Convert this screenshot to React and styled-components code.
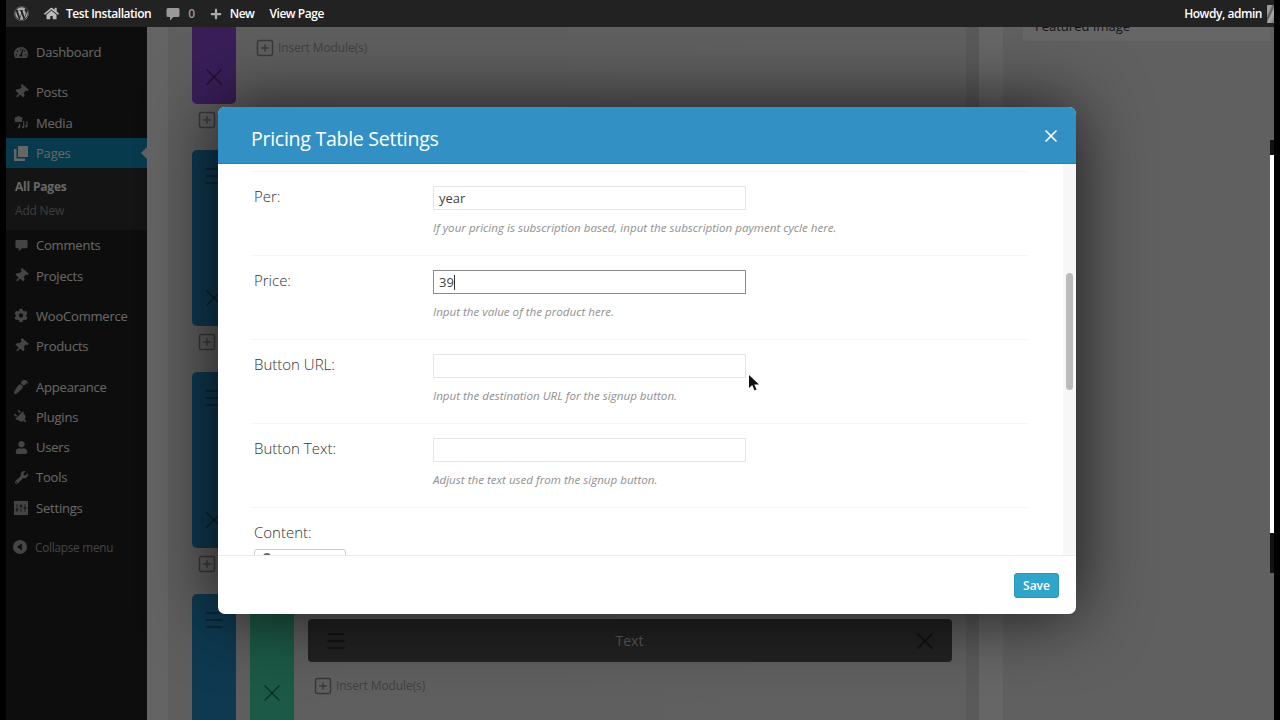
import styled, { createGlobalStyle } from 'styled-components';
import { Menu, X, SquarePlus } from 'lucide-react';
import {
  FaWordpress,
  FaHome,
  FaPlus,
  FaTachometerAlt,
  FaThumbtack,
  FaCog,
  FaPaintBrush,
  FaPlug,
  FaUser,
  FaWrench,
} from 'react-icons/fa';

const GlobalStyle = createGlobalStyle`
  html, body {
    margin: 0;
    padding: 0;
    background: #000;
    font-family: "Open Sans", "Liberation Sans", sans-serif;
  }
  * {
    box-sizing: border-box;
  }
`;

const Frame = styled.div`
  position: relative;
  width: 1280px;
  height: 720px;
  padding: 0 6px;
  background: #000;
  overflow: hidden;
`;

const Screen = styled.div`
  display: flex;
  flex-direction: column;
  height: 100%;
  background: #f1f1f1;
`;

const TopBar = styled.header`
  position: relative;
  z-index: 3;
  flex: none;
  display: flex;
  align-items: center;
  gap: 15px;
  height: 27px;
  padding-left: 8px;
  background: #222;
  color: #fff;
  font-size: 12px;
  font-weight: 600;
  letter-spacing: -0.45px;
`;

const TopGroup = styled.div`
  display: flex;
  align-items: center;
  gap: ${p => p.$gap || 7}px;
  color: ${p => p.$color || '#fff'};
`;

const TopRight = styled.div`
  margin-left: auto;
  display: flex;
  align-items: center;
  gap: 5px;
`;

const Avatar = styled.div`
  width: 7px;
  height: 18px;
  background: linear-gradient(115deg, #999 30%, #555 45%, #aaa 60%, #777);
`;

const Body = styled.div`
  flex: 1;
  display: flex;
  min-height: 0;
`;

const Sidebar = styled.nav`
  flex: none;
  width: 141px;
  padding-top: 10px;
  background: #222;
  color: #fff;
  font-size: 13px;
`;

const MenuItem = styled.div`
  position: relative;
  display: flex;
  align-items: center;
  height: 30.3px;
  margin-top: ${p => (p.$group ? 10 : 0)}px;
  padding-left: 8px;
  gap: 8px;
  letter-spacing: -0.2px;
  background: ${p => (p.$active ? '#0f92bf' : 'transparent')};

  ${p =>
    p.$active &&
    `&::after {
      content: '';
      position: absolute;
      right: 0;
      top: 9px;
      border: 6px solid transparent;
      border-right-color: #f1f1f1;
    }`}
`;

const MenuIcon = styled.span`
  flex: none;
  display: flex;
  align-items: center;
  justify-content: center;
  width: 14px;
  height: 16px;
  color: ${p => (p.$active ? '#fff' : '#aaa')};
  transform: ${p => p.$turn || 'none'};
`;

const SubMenu = styled.div`
  padding: 7px 0 7px 9px;
  background: #333;
  font-size: 12px;
  letter-spacing: -0.2px;
`;

const SubItem = styled.div`
  height: 24px;
  line-height: 24px;
  font-weight: ${p => (p.$current ? 700 : 400)};
  color: ${p => (p.$current ? '#fff' : '#999')};
`;

const Collapse = styled.div`
  display: flex;
  align-items: center;
  gap: 8px;
  height: 30px;
  margin-top: 9px;
  padding-left: 7px;
  font-size: 11.7px;
  letter-spacing: -0.2px;
  color: #aaa;
`;

const Canvas = styled.main`
  flex: 1;
  display: flex;
  min-width: 0;
  overflow: hidden;
`;

const Gutter = styled.div`
  flex: none;
  width: 21px;
  background: #fafafa;
`;

const Builder = styled.section`
  flex: none;
  display: flex;
  gap: 14px;
  width: 811px;
  padding-left: 24px;
  background: linear-gradient(90deg, #ececec, #f0f0f0 98.4%, #e2e2e2 98.4%);
`;

const Rail = styled.div`
  flex: none;
  width: 44px;
`;

const Stripe = styled.div`
  flex: none;
  display: flex;
  flex-direction: column;
  justify-content: ${p => p.$justify || 'space-between'};
  align-items: center;
  width: 44px;
  height: ${p => p.$height}px;
  padding: ${p => p.$padding || '14px 0'};
  border-radius: ${p => p.$radius || '5px'};
  background: ${p => p.$color};
  color: rgba(0, 0, 0, 0.4);
`;

const RailInsert = styled.div`
  display: flex;
  height: 46px;
  padding: 6px 0 0 5px;
  color: #909090;
`;

const BuilderMain = styled.div`
  flex: 1;
  min-width: 0;
  padding-top: 11px;
`;

const InsertRow = styled.div`
  display: flex;
  align-items: center;
  gap: 3px;
  height: 19px;
  padding-left: 5px;
  font-size: 12px;
  letter-spacing: -0.1px;
  color: #a0a0a0;

  svg {
    color: #909090;
  }
`;

const InnerRow = styled.div`
  display: flex;
  gap: 14px;
  margin-top: 423px;
`;

const ModuleStack = styled.div`
  flex: none;
  width: 644px;
  padding-top: 139px;
`;

const Module = styled.div`
  display: flex;
  align-items: center;
  justify-content: space-between;
  height: 43px;
  padding: 0 13px 0 16px;
  border-radius: 4px;
  background: #555;
  color: #2a2a2a;
  font-size: 14px;
`;

const ModuleTitle = styled.span`
  color: #ddd;
`;

const ModuleInsert = styled(InsertRow)`
  margin-top: 14px;
`;

const Spacer = styled.div`
  flex: none;
  width: 24px;
  background: #fefefe;
`;

const SidePanel = styled.aside`
  flex: none;
  width: 267px;
  padding-left: 20px;
`;

const SideBox = styled.div`
  height: 27px;
  margin-top: -13px;
  padding-left: 12px;
  background: #fff;
  color: #333;
  font-size: 13px;
  line-height: 25px;
`;

const EdgeSliver = styled.div`
  position: absolute;
  z-index: 3;
  top: 140px;
  right: 6px;
  width: 4px;
  height: 433px;
  background: linear-gradient(#111 15px, #fff 15px, #fff 393px, #111 393px);
`;

const Overlay = styled.div`
  position: absolute;
  z-index: 2;
  top: 27px;
  left: 6px;
  right: 6px;
  bottom: 0;
  padding: 80px 0 0 212px;
  background: rgba(0, 0, 0, 0.6);
`;

const Modal = styled.div`
  position: relative;
  display: flex;
  flex-direction: column;
  width: 858px;
  height: 507px;
  border-radius: 7px;
  background: #fff;
  box-shadow: 0 0 70px rgba(0, 0, 0, 0.75);
`;

const ModalHeader = styled.div`
  flex: none;
  display: flex;
  align-items: center;
  justify-content: space-between;
  height: 57px;
  padding: 2px 15px 0 33px;
  border-radius: 7px 7px 0 0;
  border-bottom: 1px solid #2a7fb0;
  background: #3390c4;
  color: #fff;
`;

const ModalTitle = styled.h2`
  margin: 4px 0 0;
  font-size: 19.6px;
  font-weight: 400;
  letter-spacing: -0.3px;
`;

const ModalBody = styled.div`
  flex: 1;
  display: flex;
  min-height: 0;
  border-bottom: 1px solid #ececec;
`;

const ScrollArea = styled.div`
  flex: 1;
  min-width: 0;
  padding: 7px 35px 0 32px;
  overflow: hidden;
`;

const Row = styled.div`
  display: grid;
  grid-template-columns: 179px 1fr;
  height: 84px;
  padding: 14px 0 0 4px;
  border-top: 1px solid #f6f6f6;
`;

const Label = styled.label`
  display: block;
  font-size: 15px;
  font-weight: 300;
  line-height: 20px;
  color: #333;
`;

const Field = styled.div`
  display: flex;
  align-items: center;
  width: 313px;
  height: 24px;
  padding-left: 5px;
  border: 1px solid ${p => (p.$focused ? '#8a8a8a' : '#e4e4e4')};
  font-size: 13px;
  color: #444;
`;

const Caret = styled.span`
  width: 1px;
  height: 15px;
  background: #333;
`;

const Hint = styled.p`
  margin: 10px 0 0;
  font-size: 11.6px;
  font-style: italic;
  line-height: 16px;
  color: #909090;
`;

const ContentRow = styled.div`
  padding: 14px 0 0 4px;
  border-top: 1px solid #f6f6f6;
`;

const EditorTab = styled.div`
  width: 92px;
  height: 30px;
  margin-top: 7px;
  padding: 3px 0 0 8px;
  border: 1px solid #ccc;
  border-radius: 3px 3px 0 0;
`;

const EditorDot = styled.div`
  width: 8px;
  height: 8px;
  border-radius: 50%;
  background: #666;
`;

const ScrollTrack = styled.div`
  flex: none;
  width: 13px;
  padding: 109px 3px 0;
  background: #f7f7f7;
`;

const ScrollThumb = styled.div`
  height: 117px;
  border-radius: 4px;
  background: #bbb;
`;

const ModalFooter = styled.div`
  flex: none;
  display: flex;
  align-items: center;
  justify-content: flex-end;
  height: 58px;
  padding-right: 17px;
`;

const SaveButton = styled.button`
  width: 45px;
  height: 25px;
  padding: 0;
  border: 1px solid #2a95b8;
  border-radius: 3px;
  background: #2fa5c9;
  color: #fff;
  font-family: inherit;
  font-size: 12px;
  font-weight: 600;
`;

const Pointer = styled.svg`
  position: absolute;
  left: 531px;
  top: 268px;
`;

// dashicons that the icon packages do not have
const CommentIcon = ({ size = 14, color = 'currentColor' }) => (
  <svg width={size} height={size} viewBox="0 0 14 14" fill={color}>
    <path d="M2 1h10a1.5 1.5 0 0 1 1.5 1.5v6A1.5 1.5 0 0 1 12 10H7.5L4 13.5V10H2A1.5 1.5 0 0 1 .5 8.500v-6A1.500 1.500 0 0 1 2 1z" />
  </svg>
);

const MediaIcon = () => (
  <svg width="17" height="15" viewBox="0 0 17 15" fill="currentColor">
    <path d="M1 1h2l1-1h3l1 1h2v6H1z" />
    <path d="M11 6h1.500v7a1.500 1.500 0 1 1-1.500-1.400zM15 6h1.500v6a1.500 1.500 0 1 1-1.500-1.400zM6 9h1.500v4a1.500 1.500 0 1 1-1.500-1.400z" />
  </svg>
);

const PagesIcon = () => (
  <svg width="14" height="15" viewBox="0 0 14 15" fill="currentColor">
    <path d="M4 0h10v11H4z" />
    <path d="M0 3h2.500v9.500H11V15H0z" />
  </svg>
);

const SettingsIcon = () => (
  <svg width="14" height="14" viewBox="0 0 14 14">
    <rect width="14" height="14" fill="currentColor" />
    <path d="M3 3v8M7 3v8M11 3v8" stroke="#000" strokeOpacity=".55" strokeWidth="1" />
    <path d="M1.500 8.500h3M5.500 5h3M9.500 7h3" stroke="#000" strokeOpacity=".55" strokeWidth="1.500" />
  </svg>
);

const CollapseIcon = () => (
  <svg width="14" height="14" viewBox="0 0 14 14">
    <circle cx="7" cy="7" r="7" fill="#aaa" />
    <path d="M8.800 3.500v7L4 7z" fill="#222" />
  </svg>
);

const mainMenu = [
  { label: 'Dashboard', icon: <FaTachometerAlt size={15} /> },
  { label: 'Posts', icon: <FaThumbtack size={14} />, turn: 'rotate(40deg)', group: true },
  { label: 'Media', icon: <MediaIcon /> },
  { label: 'Pages', icon: <PagesIcon />, active: true },
];

const lowerMenu = [
  { label: 'Comments', icon: <CommentIcon size={13} /> },
  { label: 'Projects', icon: <FaThumbtack size={14} />, turn: 'rotate(40deg)' },
  { label: 'WooCommerce', icon: <FaCog size={15} />, group: true },
  { label: 'Products', icon: <FaThumbtack size={14} />, turn: 'rotate(40deg)' },
  { label: 'Appearance', icon: <FaPaintBrush size={14} />, turn: 'rotate(180deg)', group: true },
  { label: 'Plugins', icon: <FaPlug size={14} />, turn: 'rotate(-45deg)' },
  { label: 'Users', icon: <FaUser size={13} /> },
  { label: 'Tools', icon: <FaWrench size={13} /> },
  { label: 'Settings', icon: <SettingsIcon /> },
];

const fields = [
  { label: 'Per:', value: 'year', hint: 'If your pricing is subscription based, input the subscription payment cycle here.' },
  { label: 'Price:', value: '39', focused: true, hint: 'Input the value of the product here.' },
  { label: 'Button URL:', value: '', hint: 'Input the destination URL for the signup button.' },
  { label: 'Button Text:', value: '', hint: 'Adjust the text used from the signup button.' },
];

const renderItem = item => (
  <MenuItem key={item.label} $group={item.group} $active={item.active}>
    <MenuIcon $turn={item.turn} $active={item.active}>
      {item.icon}
    </MenuIcon>
    {item.label}
  </MenuItem>
);

export default function App() {
  return (
    <Frame>
      <GlobalStyle />
      <Screen>
        <TopBar>
          <TopGroup $color="#aaa">
            <FaWordpress size={15} />
          </TopGroup>
          <TopGroup>
            <FaHome size={15} color="#bbb" />
            Test Installation
          </TopGroup>
          <TopGroup $gap={8} $color="#999">
            <CommentIcon />0
          </TopGroup>
          <TopGroup $gap={8}>
            <FaPlus size={12} color="#aaa" />
            New
          </TopGroup>
          <TopGroup>View Page</TopGroup>
          <TopRight>
            Howdy, admin
            <Avatar />
          </TopRight>
        </TopBar>

        <Body>
          <Sidebar>
            {mainMenu.map(renderItem)}
            <SubMenu>
              <SubItem $current>All Pages</SubItem>
              <SubItem>Add New</SubItem>
            </SubMenu>
            {lowerMenu.map(renderItem)}
            <Collapse>
              <CollapseIcon />
              Collapse menu
            </Collapse>
          </Sidebar>

          <Canvas>
            <Gutter />
            <Builder>
              <Rail>
                <Stripe $height={77} $color="#8f4ddb" $justify="flex-end" $radius="0 0 5px 5px" $padding="0 0 13px">
                  <X size={28} strokeWidth={1.5} />
                </Stripe>
                <RailInsert>
                  <SquarePlus size={20} strokeWidth={1.8} />
                </RailInsert>
                <Stripe $height={176} $color="#2490c8">
                  <Menu size={24} strokeWidth={1.5} />
                  <X size={28} strokeWidth={1.5} />
                </Stripe>
                <RailInsert>
                  <SquarePlus size={20} strokeWidth={1.8} />
                </RailInsert>
                <Stripe $height={176} $color="#2490c8">
                  <Menu size={24} strokeWidth={1.5} />
                  <X size={28} strokeWidth={1.5} />
                </Stripe>
                <RailInsert>
                  <SquarePlus size={20} strokeWidth={1.8} />
                </RailInsert>
                <Stripe $height={176} $color="#2490c8">
                  <Menu size={24} strokeWidth={1.5} />
                </Stripe>
              </Rail>

              <BuilderMain>
                <InsertRow>
                  <SquarePlus size={20} strokeWidth={1.8} />
                  Insert Module(s)
                </InsertRow>
                <InnerRow>
                  <Stripe $height={260} $color="#48dfae" $justify="flex-end" $padding="0 0 33px">
                    <X size={28} strokeWidth={1.5} />
                  </Stripe>
                  <ModuleStack>
                    <Module>
                      <Menu size={24} strokeWidth={1.5} />
                      <ModuleTitle>Text</ModuleTitle>
                      <X size={28} strokeWidth={1.5} />
                    </Module>
                    <ModuleInsert>
                      <SquarePlus size={20} strokeWidth={1.8} />
                      Insert Module(s)
                    </ModuleInsert>
                  </ModuleStack>
                </InnerRow>
              </BuilderMain>
            </Builder>
            <Spacer />
            <SidePanel>
              <SideBox>Featured Image</SideBox>
            </SidePanel>
          </Canvas>
        </Body>
      </Screen>

      <EdgeSliver />

      <Overlay>
        <Modal>
          <ModalHeader>
            <ModalTitle>Pricing Table Settings</ModalTitle>
            <X size={20} strokeWidth={2} />
          </ModalHeader>
          <ModalBody>
            <ScrollArea>
              {fields.map(field => (
                <Row key={field.label}>
                  <Label>{field.label}</Label>
                  <div>
                    <Field $focused={field.focused}>
                      {field.value}
                      {field.focused && <Caret />}
                    </Field>
                    <Hint>{field.hint}</Hint>
                  </div>
                </Row>
              ))}
              <ContentRow>
                <Label>Content:</Label>
                <EditorTab>
                  <EditorDot />
                </EditorTab>
              </ContentRow>
            </ScrollArea>
            <ScrollTrack>
              <ScrollThumb />
            </ScrollTrack>
          </ModalBody>
          <ModalFooter>
            <SaveButton>Save</SaveButton>
          </ModalFooter>
          <Pointer width="11" height="16" viewBox="0 0 11 16">
            <path d="M0 0v13l3.200-3 2.300 5.500 2-.9L5.300 9.500H10z" fill="#111" />
          </Pointer>
        </Modal>
      </Overlay>
    </Frame>
  );
}
